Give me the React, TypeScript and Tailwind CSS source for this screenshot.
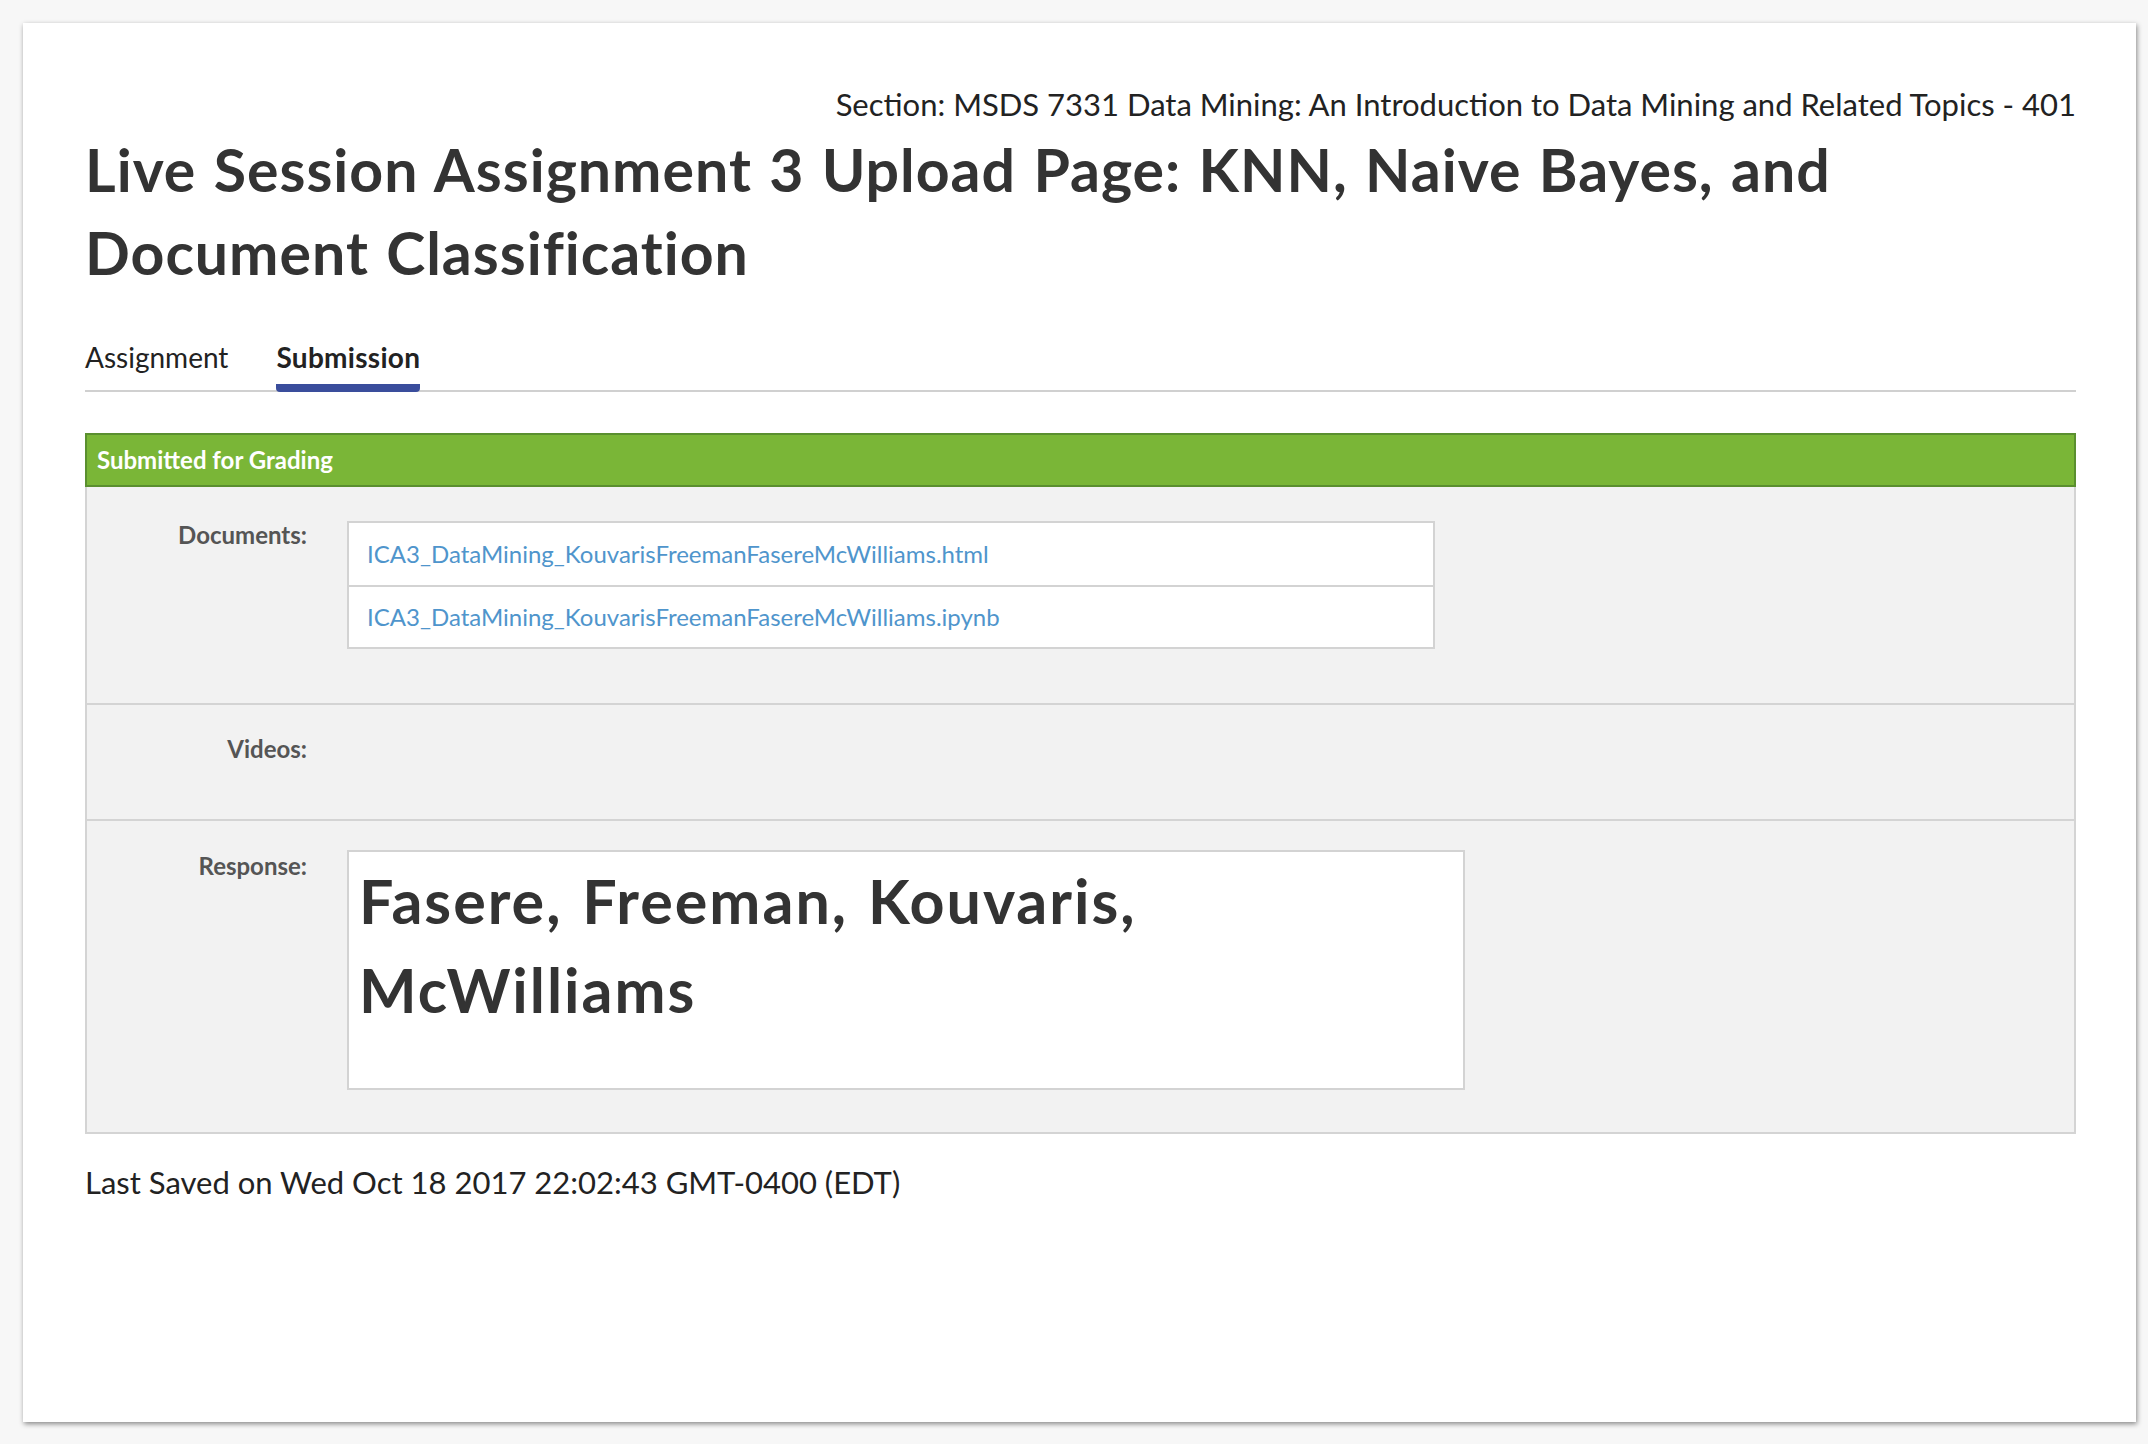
import React from "react";

const docs = [
  "ICA3_DataMining_KouvarisFreemanFasereMcWilliams.html",
  "ICA3_DataMining_KouvarisFreemanFasereMcWilliams.ipynb",
];

export default function App() {
  return (
    <div className="min-h-screen bg-[#f7f7f7] pt-[23px] pl-[23px] font-['Lato',sans-serif]">
      <div className="w-[2113px] h-[1399px] bg-white shadow-[1px_2px_5px_rgba(0,0,0,0.45)] pl-[62px] pr-[60px] pt-[63px]">
        <div className="text-right text-[31px] leading-[36px] text-[#222]">
          Section: MSDS 7331 Data Mining: An Introduction to Data Mining and Related Topics - 401
        </div>
        <h1 className="mt-[6px] text-[59px] leading-[83px] font-bold tracking-[1px] [word-spacing:2px] text-[#333]">
          Live Session Assignment 3 Upload Page: KNN, Naive Bayes, and
          <br />
          Document Classification
        </h1>

        {/* tabs */}
        <div className="mt-[46px] flex gap-[48px] border-b-2 border-[#d0d0d0] text-[28px] leading-[34px] text-[#222]">
          <div className="pb-[16px]">Assignment</div>
          <div className="relative pb-[16px] font-bold tracking-[0.3px]">
            Submission
            <div className="absolute left-0 right-0 bottom-[-2px] h-[8px] bg-[#3a4d9c] rounded-b-[4px]" />
          </div>
        </div>

        {/* submission panel */}
        <div className="mt-[41px]">
          <div className="h-[54px] border-2 border-[#5a8f2f] bg-[#7ab637] px-[10px] text-[24px] leading-[49px] font-bold text-white">
            Submitted for Grading
          </div>
          <div className="border-x-2 border-b-2 border-[#d4d4d4] bg-[#f2f2f2]">
            <div className="flex gap-[40px] pt-[34px] pb-[54px] border-b-2 border-[#d4d4d4]">
              <div className="w-[220px] shrink-0 text-right text-[24px] leading-[28px] font-bold text-[#555]">Documents:</div>
              <div className="w-[1088px] border-2 border-[#d3d3d3] bg-white">
                {docs.map((d, i) => (
                  <div
                    key={d}
                    className={`h-[62px] flex items-center px-[18px] text-[24px] text-[#4f95cc] ${i > 0 ? "border-t-2 border-[#d3d3d3]" : ""}`}
                  >
                    {d}
                  </div>
                ))}
              </div>
            </div>
            <div className="flex gap-[40px] pt-[30px] pb-[56px] border-b-2 border-[#d4d4d4]">
              <div className="w-[220px] shrink-0 text-right text-[24px] leading-[28px] font-bold text-[#555]">Videos:</div>
            </div>
            <div className="flex gap-[40px] pt-[29px] pb-[42px]">
              <div className="w-[220px] shrink-0 text-right text-[24px] leading-[28px] font-bold text-[#555] pt-[2px]">Response:</div>
              <div className="w-[1118px] h-[240px] border-2 border-[#d3d3d3] bg-white px-[10px] pt-[4px]">
                <div className="text-[61px] leading-[89px] font-bold tracking-[2px] [word-spacing:3px] text-[#333]">
                  Fasere, Freeman, Kouvaris,
                  <br />
                  McWilliams
                </div>
              </div>
            </div>
          </div>
        </div>

        <div className="mt-[31px] text-[31px] leading-[35px] text-[#222]">
          Last Saved on Wed Oct 18 2017 22:02:43 GMT-0400 (EDT)
        </div>
      </div>
    </div>
  );
}
